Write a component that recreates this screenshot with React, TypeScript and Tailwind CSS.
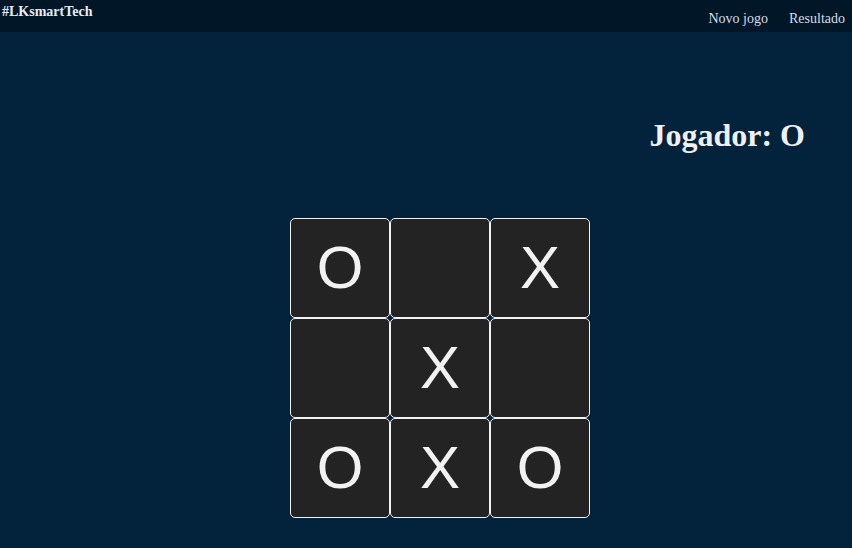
import React from "react";

const board = ["O", "", "X", "", "X", "", "O", "X", "O"];

export default function App() {
  return (
    <div className="w-[852px] h-[548px] bg-[#03223c] overflow-hidden flex flex-col" style={{ fontFamily: '"Liberation Serif", serif' }}>
      <header className="h-[32px] bg-[#011627] flex justify-between text-[#e8edf2]">
        <div className="pl-[2px] pt-[4px] text-[14px] font-bold leading-[16px]">#LKsmartTech</div>
        <nav className="flex gap-[21px] pr-[7px] pt-[11px] text-[14px] leading-[16px] text-[#d6dee8]">
          <span>Novo jogo</span>
          <span>Resultado</span>
        </nav>
      </header>
      <div className="flex justify-end pr-[47px] pt-[85px]">
        <h1 className="text-[32px] font-bold leading-[37px] text-[#f0f0f0]">Jogador: O</h1>
      </div>
      <div className="flex justify-center pt-[64px] pl-[28px]">
        <div className="grid grid-cols-[100px_100px_100px] grid-rows-[100px_100px_100px]">
          {board.map((v, i) => (
            <div
              key={i}
              className="border border-[#f2f2f2] rounded-[5px] bg-[#232323] flex items-center justify-center text-[60px] text-[#f2f2f2]"
              style={{ fontFamily: '"Liberation Sans", Arial, sans-serif' }}
            >
              {v}
            </div>
          ))}
        </div>
      </div>
    </div>
  );
}
